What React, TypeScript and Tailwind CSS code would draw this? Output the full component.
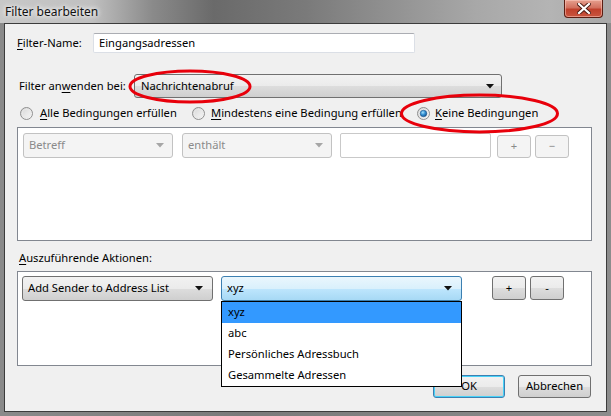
import React from "react";

const font = { fontFamily: '"Noto Sans", "Open Sans", sans-serif' };

function Arrow({ disabled }: { disabled?: boolean }) {
  return (
    <svg width="8" height="5" viewBox="0 0 8 5" className="shrink-0">
      <path d="M0 0 H8 L4 4.5 Z" fill={disabled ? "#a6a6a6" : "#111"} />
    </svg>
  );
}

function Radio({ checked }: { checked?: boolean }) {
  return (
    <svg width="13" height="13" viewBox="0 0 13 13" className="shrink-0">
      <defs>
        <linearGradient id="rbg" x1="0" y1="0" x2="1" y2="1">
          <stop offset="0" stopColor="#d4d4d4" />
          <stop offset="1" stopColor="#fbfbfb" />
        </linearGradient>
        <radialGradient id="rdot" cx="0.4" cy="0.35" r="0.7">
          <stop offset="0" stopColor="#a9e1fa" />
          <stop offset="0.45" stopColor="#3a95d6" />
          <stop offset="1" stopColor="#0d4f8f" />
        </radialGradient>
      </defs>
      <circle cx="6.5" cy="6.5" r="6" fill="url(#rbg)" stroke="#8f8f8f" strokeWidth="1" />
      <circle cx="6.5" cy="6.5" r="4.2" fill="none" stroke="#e9e9e9" strokeWidth="0.8" />
      {checked && <circle cx="6.5" cy="6.5" r="3.3" fill="url(#rdot)" stroke="#1a4f83" strokeWidth="0.5" />}
    </svg>
  );
}

function U({ children }: { children: React.ReactNode }) {
  return <span className="underline underline-offset-2">{children}</span>;
}

export default function App() {
  return (
    <div
      className="relative w-[611px] h-[416px] flex flex-col overflow-hidden bg-[linear-gradient(90deg,#8a8a8a_0%,#7a7a7a_40%,#8c8c8c_100%)] text-[11.2px] text-black"
      style={font}
    >
      {/* Title bar */}
      <div className="h-[23px] flex items-start justify-between bg-[linear-gradient(90deg,#c8c8c8_0%,#c0c0c0_15%,#8a8a8a_25%,#6a6a6a_35%,#7a7a7a_50%,#8e8e8e_62%,#a8a8a8_78%,#b4b4b4_90%,#a8a8a8_100%)]">
        <div className="pl-[5px] pt-[3px] text-[12px] text-[#111] [text-shadow:0_0_6px_#fff,0_0_4px_#fff]">
          Filter bearbeiten
        </div>
        <div className="mr-[8px] w-[39px] h-[18px] rounded-b-[4px] border border-t-0 border-[#5b1d12] bg-[linear-gradient(180deg,#e6a08f_0%,#d2705e_45%,#c0402c_55%,#c9553f_100%)] flex items-center justify-center shadow-[inset_0_0_0_1px_rgba(255,210,200,0.5)]">
          <svg width="14" height="11" viewBox="0 0 14 11">
            <path d="M2 1 L12 10 M12 1 L2 10" stroke="#4a1a12" strokeWidth="4" strokeLinecap="square" />
            <path d="M2 1 L12 10 M12 1 L2 10" stroke="#fff" strokeWidth="2.2" strokeLinecap="square" />
          </svg>
        </div>
      </div>

      {/* Body */}
      <div className="flex-1 mx-[4px] mb-[4px] border border-[#3c3c3c] bg-[#f0f0f0] flex flex-col">
        {/* Filter-Name */}
        <div className="flex items-center mt-[9px] ml-[12px] h-[20px]">
          <div className="w-[76px]"><U>F</U>ilter-Name:</div>
          <div className="w-[322px] h-[20px] bg-white border border-[#dbdfe6] border-t-[#abadb3] rounded-[2px] flex items-center pl-[5px]">
            Eingangsadressen
          </div>
        </div>

        {/* Filter anwenden bei */}
        <div className="flex items-center mt-[21px] ml-[14px] h-[24px]">
          <div className="w-[115px]">Filter an<U>w</U>enden bei:</div>
          <div className="w-[368px] h-[24px] rounded-[3px] border border-[#707070] bg-[linear-gradient(180deg,#f2f2f2_0%,#ebebeb_50%,#dddddd_51%,#cfcfcf_100%)] flex items-center justify-between pl-[6px] pr-[7px]">
            <span>Nachrichtenabruf</span>
            <Arrow />
          </div>
        </div>

        {/* Radios */}
        <div className="flex items-center mt-[7px] ml-[15px] h-[16px]">
          <div className="w-[172px] flex items-center gap-[7px]">
            <Radio />
            <span><U>A</U>lle Bedingungen erfüllen</span>
          </div>
          <div className="w-[225px] flex items-center gap-[6px]">
            <Radio />
            <span><U>M</U>indestens eine Bedingung erfüllen</span>
          </div>
          <div className="flex items-center gap-[5px]">
            <Radio checked />
            <span><U>K</U>eine Bedingungen</span>
          </div>
        </div>

        {/* Conditions list */}
        <div className="mt-[6px] ml-[12px] w-[575px] h-[114px] bg-white border border-[#828790] pt-[5px] pl-[5px]">
          <div className="flex items-start">
            <div className="w-[150px] h-[25px] rounded-[3px] border border-[#c2c2c2] bg-[#f4f4f4] text-[#8a8a8a] flex items-center justify-between pl-[5px] pr-[8px]">
              <span>Betreff</span>
              <Arrow disabled />
            </div>
            <div className="ml-[9px] w-[150px] h-[25px] rounded-[3px] border border-[#c2c2c2] bg-[#f4f4f4] text-[#8a8a8a] flex items-center justify-between pl-[5px] pr-[8px]">
              <span>enthält</span>
              <Arrow disabled />
            </div>
            <div className="ml-[8px] w-[151px] h-[25px] rounded-[2px] border border-[#c9c9c9] bg-white" />
            <div className="ml-[6px] mt-[2px] w-[34px] h-[23px] rounded-[3px] border border-[#c2c2c2] bg-[#f4f4f4] text-[#8a8a8a] flex items-center justify-center">+</div>
            <div className="ml-[4px] mt-[2px] w-[34px] h-[23px] rounded-[3px] border border-[#c2c2c2] bg-[#f4f4f4] text-[#8a8a8a] flex items-center justify-center">−</div>
          </div>
        </div>

        {/* Aktionen label */}
        <div className="mt-[8px] ml-[14px] h-[18px] flex items-center">
          <span><U>A</U>uszuführende Aktionen:</span>
        </div>

        {/* Actions list */}
        <div className="mt-[4px] ml-[12px] w-[575px] h-[95px] bg-white border border-[#828790] pt-[4px] pl-[4px]">
          <div className="flex items-start">
            <div className="w-[191px] h-[25px] rounded-[3px] border border-[#707070] bg-[linear-gradient(180deg,#f2f2f2_0%,#ebebeb_50%,#dddddd_51%,#cfcfcf_100%)] flex items-center justify-between pl-[5px] pr-[9px]">
              <span>Add Sender to Address List</span>
              <Arrow />
            </div>
            <div className="ml-[8px] w-[241px] h-[25px] rounded-[3px] border border-[#3c7fb1] bg-[linear-gradient(180deg,#eaf6fd_0%,#d9f0fc_50%,#bee6fd_51%,#a7d9f5_100%)] flex items-center justify-between pl-[5px] pr-[9px]">
              <span>xyz</span>
              <Arrow />
            </div>
            <div className="ml-[30px] mt-[0px] w-[34px] h-[24px] rounded-[3px] border border-[#707070] bg-[linear-gradient(180deg,#f2f2f2_0%,#ebebeb_50%,#dddddd_51%,#cfcfcf_100%)] flex items-center justify-center">+</div>
            <div className="ml-[4px] w-[34px] h-[24px] rounded-[3px] border border-[#707070] bg-[linear-gradient(180deg,#f2f2f2_0%,#ebebeb_50%,#dddddd_51%,#cfcfcf_100%)] flex items-center justify-center">-</div>
          </div>
        </div>

        {/* Buttons */}
        <div className="mt-[9px] mr-[15px] flex justify-end gap-[13px]">
          <div className="w-[72px] h-[23px] rounded-[3px] border border-[#3c7fb1] bg-[linear-gradient(180deg,#f2f2f2_0%,#ebebeb_50%,#dddddd_51%,#cfcfcf_100%)] shadow-[inset_0_0_0_1px_#48d2f8] flex items-center justify-center">OK</div>
          <div className="w-[73px] h-[23px] rounded-[3px] border border-[#707070] bg-[linear-gradient(180deg,#f2f2f2_0%,#ebebeb_50%,#dddddd_51%,#cfcfcf_100%)] flex items-center justify-center">Abbrechen</div>
        </div>
      </div>

      {/* Dropdown popup */}
      <div className="absolute left-[221px] top-[301px] w-[241px] h-[86px] bg-white border border-black flex flex-col">
        <div className="h-[21px] bg-[#3399ff] flex items-center pl-[6px]">xyz</div>
        <div className="h-[21px] flex items-center pl-[6px]">abc</div>
        <div className="h-[21px] flex items-center pl-[6px]">Persönliches Adressbuch</div>
        <div className="h-[21px] flex items-center pl-[6px]">Gesammelte Adressen</div>
      </div>

      {/* Red annotation ellipses */}
      <svg className="absolute left-0 top-0 pointer-events-none" width="611" height="416">
        <ellipse cx="190" cy="86.5" rx="60" ry="15.5" fill="none" stroke="#e8000b" strokeWidth="3" />
        <ellipse cx="479.5" cy="113.5" rx="78" ry="18.5" fill="none" stroke="#e8000b" strokeWidth="3" />
      </svg>
    </div>
  );
}
